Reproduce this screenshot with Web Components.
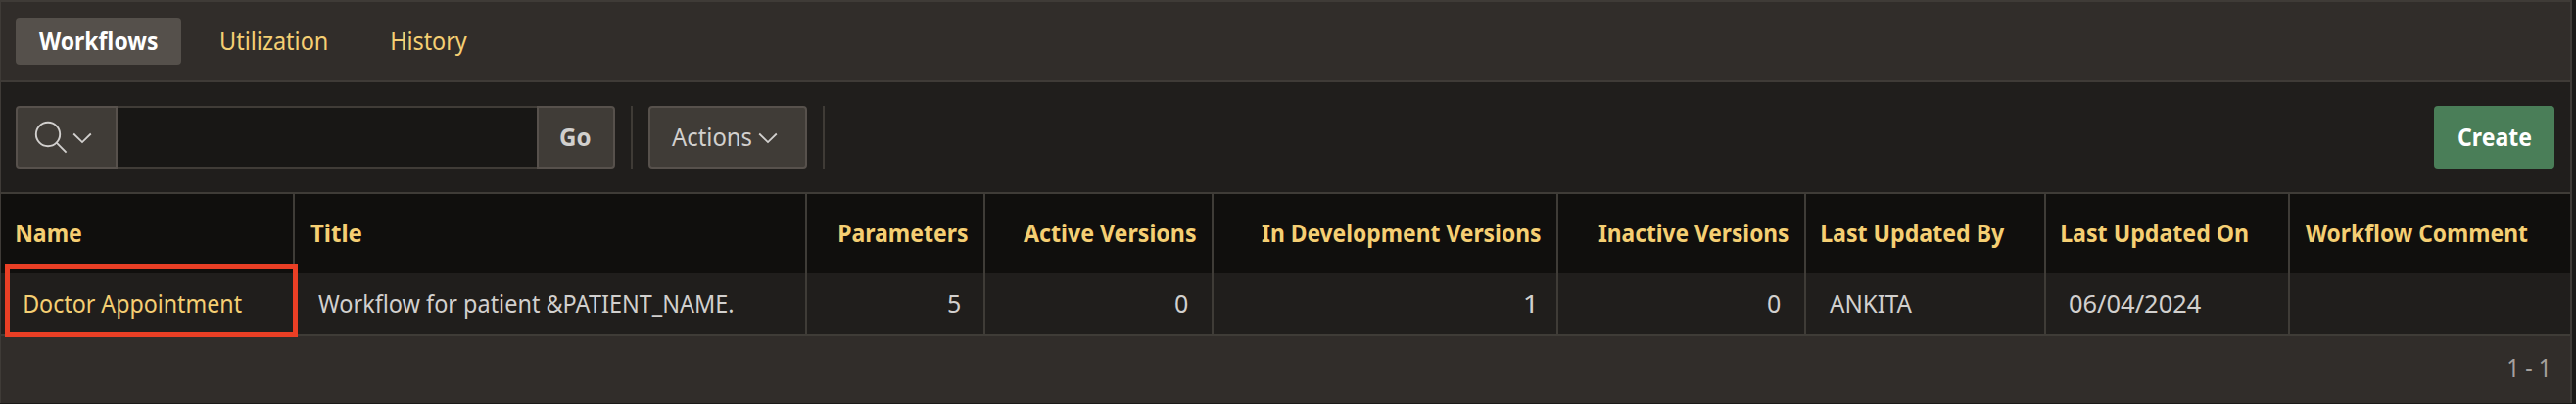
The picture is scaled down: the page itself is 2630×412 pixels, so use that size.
<!DOCTYPE html>
<html lang="en">
<head>
<meta charset="utf-8">
<title>Workflows</title>
<style>
  html, body { margin: 0; background: #1b1a18; }
  body { width: 2630px; height: 412px; overflow: hidden; font: 25px/32px "Noto Sans", "Open Sans", sans-serif; color: #d2d0ce; }
</style>
</head>
<body>
<workflow-console></workflow-console>
<script>
const define = (name, html, setup) => customElements.define(name, class extends HTMLElement {
  connectedCallback() {
    if (this.shadowRoot) return;
    const t = document.createElement('template');
    t.innerHTML = html;
    this.attachShadow({ mode: 'open' }).append(t.content.cloneNode(true));
    if (setup) setup(this);
  }
});

/* A label whose glyphs are condensed to an exact visible width. */
const ctx = document.createElement('canvas').getContext('2d');
define('fit-label', `
  <style>
    :host { display: block; height: 32px; white-space: nowrap; flex: none; }
    span { display: inline-block; transform-origin: 0 50%; }
  </style><span><slot></slot></span>`, el => {
  const cs = getComputedStyle(el);
  ctx.font = `${cs.fontWeight} ${cs.fontSize} ${cs.fontFamily}`;
  const m = ctx.measureText(el.textContent.trim());
  const w = +el.getAttribute('w');
  const k = w / (m.actualBoundingBoxLeft + m.actualBoundingBoxRight);
  el.style.width = w + 'px';
  el.shadowRoot.querySelector('span').style.transform =
    `translate(${m.actualBoundingBoxLeft * k}px, -1px) scaleX(${k})`;
});

define('chevron-icon', `
  <style>:host { display: block; width: 20px; height: 12px; flex: none; } svg { display: block; }</style>
  <svg width="20" height="12" viewBox="0 0 20 12" fill="none" stroke="#d2d0ce" stroke-width="1.8"><path d="M1.2 1.5 10 10.1l8.800-8.600"/></svg>`);

define('search-icon', `
  <style>:host { display: block; width: 34px; height: 34px; flex: none; } svg { display: block; }</style>
  <svg width="34" height="34" viewBox="0 0 34 34" fill="none" stroke="#d2d0ce" stroke-width="1.9"><circle cx="14" cy="14" r="12.200"/><path d="M22.700 22.700 32.600 32.600"/></svg>`);

define('nav-tab', `
  <style>
    :host { display: flex; box-sizing: border-box; height: 48px; padding: 8px 24px; border-radius: 4px; color: #f5cf73; }
    :host([active]) { background: #55504b; color: #fff; font-weight: 700; }
  </style><slot></slot>`);

define('tool-button', `
  <style>
    :host { display: flex; align-items: center; box-sizing: border-box; height: 64px; padding: 0 22px; background: #403c37; border: 2px solid #57514c; border-radius: 4px; flex: none; }
    :host([kind=menu]) { border-radius: 4px 0 0 4px; width: 104px; padding: 0 0 0 17px; gap: 5px; }
    ::slotted(chevron-icon) { margin-top: 2px; }
    :host([kind=go]) { border-radius: 0 4px 4px 0; width: 80px; font-weight: 700; }
    :host([kind=actions]) { width: 162px; gap: 7px; }
    :host([kind=create]) { width: 123px; padding: 0 25px; border: 0; background: #4a7e58; color: #fff; font-weight: 700; }
  </style><slot></slot>`);

define('search-field', `
  <style>
    :host { display: flex; }
    .box { width: 428px; height: 64px; box-sizing: border-box; background: #181715; border: solid #403c37; border-width: 2px 0; }
  </style>
  <tool-button kind="menu"><search-icon></search-icon><chevron-icon></chevron-icon></tool-button>
  <div class="box"></div>
  <tool-button kind="go"><fit-label w="31">Go</fit-label></tool-button>`);

define('tool-divider', `<style>:host { display: block; width: 2px; height: 64px; background: #3f3b36; flex: none; }</style>`);

define('grid-cell', `
  <style>
    :host { display: flex; box-sizing: border-box; height: 63px; padding: 16px 24px 0; border-right: 2px solid #3f3c37; background: #201e1c; }
    :host([head]) { height: 80px; padding: 24px 16px 0; background: #100f0d; color: #f5cf73; font-weight: 700; }
    :host([end]) { justify-content: flex-end; }
    :host([link]) { color: #f5cf73; }
    :host([last]) { border-right: 0; }
  </style><slot></slot>`);

define('report-grid', `
  <style>
    :host { display: grid; position: relative; grid-template-columns: 300px 523px 182px 233px 352px 253px 245px 249px 286px; border-bottom: 2px solid #3f3c37; }
    .mark { position: absolute; left: 4px; top: 71px; width: 299px; height: 75px; box-sizing: border-box; border: 5px solid #ea3f25; }
  </style>
  <grid-cell head><fit-label w="66">Name</fit-label></grid-cell>
  <grid-cell head><fit-label w="52">Title</fit-label></grid-cell>
  <grid-cell head end><fit-label w="131">Parameters</fit-label></grid-cell>
  <grid-cell head end><fit-label w="176">Active Versions</fit-label></grid-cell>
  <grid-cell head end><fit-label w="285">In Development Versions</fit-label></grid-cell>
  <grid-cell head end><fit-label w="194">Inactive Versions</fit-label></grid-cell>
  <grid-cell head><fit-label w="187">Last Updated By</fit-label></grid-cell>
  <grid-cell head><fit-label w="190">Last Updated On</fit-label></grid-cell>
  <grid-cell head last><fit-label w="227">Workflow Comment</fit-label></grid-cell>
  <grid-cell link><fit-label w="222">Doctor Appointment</fit-label></grid-cell>
  <grid-cell><fit-label w="423">Workflow for patient &amp;PATIENT_NAME.</fit-label></grid-cell>
  <grid-cell end><fit-label w="12">5</fit-label></grid-cell>
  <grid-cell end><fit-label w="13">0</fit-label></grid-cell>
  <grid-cell end><fit-label w="8">1</fit-label></grid-cell>
  <grid-cell end><fit-label w="13">0</fit-label></grid-cell>
  <grid-cell><fit-label w="84">ANKITA</fit-label></grid-cell>
  <grid-cell><fit-label w="134">06/04/2024</fit-label></grid-cell>
  <grid-cell last></grid-cell>
  <div class="mark"></div>`);

define('workflow-console', `
  <style>
    :host { display: block; box-sizing: border-box; width: 2626px; height: 411px; border: solid #3f3b37; border-width: 2px 2px 0 1px; background: #312d2a; }
    nav { display: flex; box-sizing: border-box; height: 82px; padding: 16px 0 0 15px; border-bottom: 2px solid #3f3b37; }
    nav nav-tab:nth-child(2) { margin-left: 17px; }
    nav nav-tab:nth-child(3) { margin-left: 18px; }
    .bar { display: flex; align-items: center; box-sizing: border-box; height: 114px; padding: 0 16px 0 15px; background: #201e1c; border-bottom: 2px solid #3f3c37; }
    .bar tool-divider { margin: 0 16px; }
    .bar [kind=create] { margin-left: auto; }
    footer { display: flex; justify-content: flex-end; padding: 16px 24px 0 0; color: #a5a19e; }
  </style>
  <nav>
    <nav-tab active><fit-label w="121">Workflows</fit-label></nav-tab>
    <nav-tab><fit-label w="108">Utilization</fit-label></nav-tab>
    <nav-tab><fit-label w="77">History</fit-label></nav-tab>
  </nav>
  <div class="bar">
    <search-field></search-field>
    <tool-divider></tool-divider>
    <tool-button kind="actions"><fit-label w="81">Actions</fit-label><chevron-icon></chevron-icon></tool-button>
    <tool-divider></tool-divider>
    <tool-button kind="create"><fit-label w="74">Create</fit-label></tool-button>
  </div>
  <report-grid></report-grid>
  <footer><fit-label w="39">1 - 1</fit-label></footer>`);
</script>
</body>
</html>
